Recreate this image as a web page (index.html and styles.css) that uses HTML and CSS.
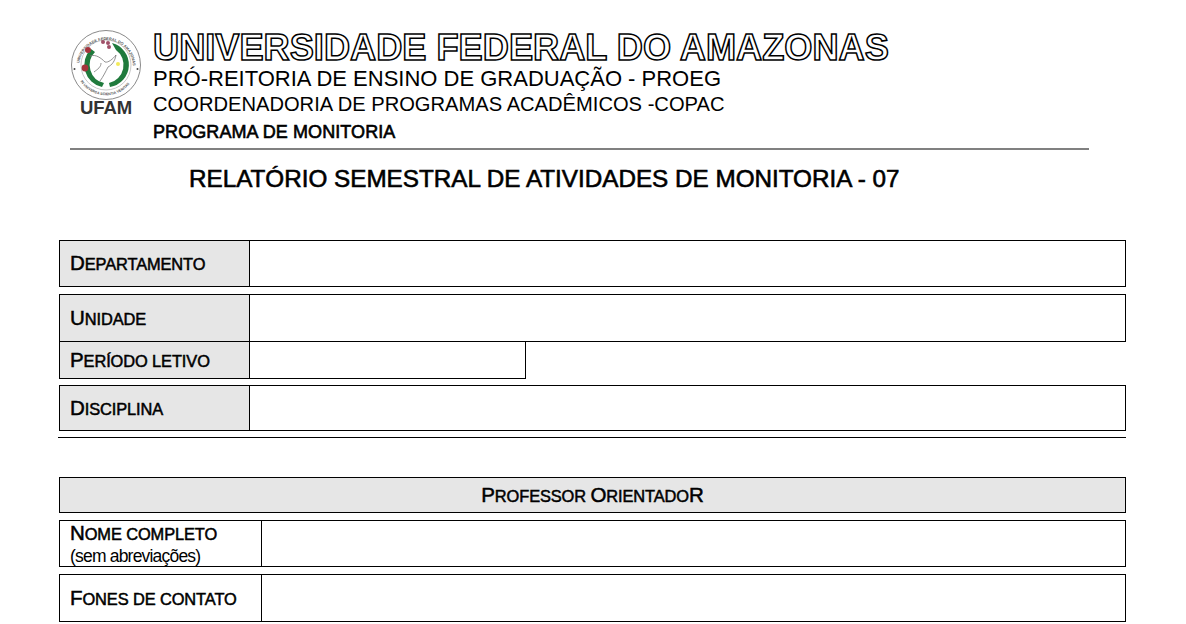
FILE: index.html
```html
<!DOCTYPE html>
<html lang="pt">
<head>
<meta charset="utf-8">
<title>Relatório semestral</title>
<link rel="stylesheet" href="styles.css">
</head>
<body>
<header class="head">
  <div class="logo">
    <svg class="seal" width="72" height="72" viewBox="0 0 72 72" aria-hidden="true">
      <circle cx="36" cy="36" r="34.5" fill="none" stroke="#8a8a8a" stroke-width="1"/>
      <circle cx="36" cy="36" r="25" fill="none" stroke="#c8c8c8" stroke-width="1"/>
      <path id="arcT" d="M9 38 A27 27 0 0 1 63 38" fill="none"/>
      <path id="arcB" d="M7 44 A30 30 0 0 0 65 44" fill="none"/>
      <text class="seal-text"><textPath href="#arcT" startOffset="4">UNIVERSIDADE FEDERAL DO AMAZONAS</textPath></text>
      <text class="seal-text small"><textPath href="#arcB" startOffset="9">IN UNIVERSA SCIENTIA VERITAS</textPath></text>
      <circle cx="4.5" cy="40" r="1" fill="#444"/><circle cx="67.5" cy="40" r="1" fill="#444"/>
      <path d="M21 20 A22.5 22.5 0 0 0 32 58 L34 54 A18.5 18.5 0 0 1 25 23 Z" fill="#1f7a3c"/>
      <path d="M42 14 A22.5 22.5 0 0 1 40 58 L39 54 A18.5 18.5 0 0 0 46 21 Z" fill="#1f7a3c"/>
      <circle cx="18" cy="21" r="3" fill="#a5343c"/><circle cx="15" cy="39" r="3.4" fill="#a5343c"/>
      <circle cx="33" cy="13" r="2" fill="#a05068"/><circle cx="38" cy="14" r="2" fill="#a05068"/><circle cx="39" cy="18" r="2" fill="#a05068"/>
      <circle cx="48" cy="35" r="2" fill="#f2ea5a"/>
      <path d="M20 27 C26 25 31 29 35 33 C38 34 43 30 46 26 C45 32 42 36 38 38 C36 42 33 48 30 52 M24 43 C28 40 31 38 31 34" fill="none" stroke="#777" stroke-width=".8"/>
    </svg>
    <span class="ufam">UFAM</span>
  </div>
  <div class="head-text">
    <h1 class="uni">UNIVERSIDADE FEDERAL DO AMAZONAS</h1>
    <p class="proeg">PRÓ-REITORIA DE ENSINO DE GRADUAÇÃO - PROEG</p>
    <p class="copac">COORDENADORIA DE PROGRAMAS ACADÊMICOS -COPAC</p>
    <p class="prog">PROGRAMA DE MONITORIA</p>
  </div>
</header>
<hr class="rule">
<h2 class="title">RELATÓRIO SEMESTRAL DE ATIVIDADES DE MONITORIA - 07</h2>

<main class="form">
  <div class="row h47 gap-after"><div class="label"><span class="caps"><b class="cap">D</b>epartamento</span></div><div class="value"></div></div>
  <div class="row h48"><div class="label"><span class="caps"><b class="cap">U</b>nidade</span></div><div class="value"></div></div>
  <div class="row-split">
    <div class="label"><span class="caps"><b class="cap">P</b>eríodo letivo</span></div><div class="value"></div>
  </div>
  <div class="row h46"><div class="label"><span class="caps"><b class="cap">D</b>isciplina</span></div><div class="value"></div></div>
  <div class="divider"></div>
  <div class="banner"><span class="caps"><b class="cap">P</b>rofessor <b class="cap">O</b>rientado<b class="cap">R</b></span></div>
  <div class="row h47 wide gap-after"><div class="label plain"><span class="caps"><b class="cap">N</b>ome completo</span><small>(sem abreviações)</small></div><div class="value"></div></div>
  <div class="row h48 wide"><div class="label plain"><span class="caps"><b class="cap">F</b>ones de contato</span></div><div class="value"></div></div>
</main>
</body>
</html>
```
FILE: styles.css
```css
* { box-sizing: border-box; }
html, body { margin: 0; padding: 0; background: #fff; }
body {
  width: 1186px;
  height: 624px;
  overflow: hidden;
  font-family: "Liberation Sans", Arial, sans-serif;
  color: #000;
}
.head { display: flex; padding: 29px 0 0 70px; height: 148px; }
.logo { width: 83px; display: flex; flex-direction: column; align-items: flex-start; }
.seal { display: block; }
.seal-text { font-size: 3.9px; fill: #555; font-weight: bold; }
.seal-text.small { font-size: 3.6px; }
.ufam { font-weight: bold; font-size: 18.5px; line-height: 14px; margin: 0 0 0 10px; color: #333; letter-spacing: -.1px; }
.head-text { display: flex; flex-direction: column; }
.uni {
  margin: 0;
  font-size: 36.2px;
  line-height: 37px;
  font-weight: bold;
  color: #fff;
  -webkit-text-stroke: 1.5px #000;
  white-space: nowrap;
}
.proeg { margin: 0; font-size: 22px; line-height: 25px; }
.copac { margin: 0; font-size: 20.15px; line-height: 27px; }
.prog { margin: 0; font-size: 18px; line-height: 28px; font-weight: normal; letter-spacing: .08px; -webkit-text-stroke: .6px #000; }
.rule { margin: 0 0 0 70px; width: 1019px; height: 2px; border: 0; background: #808080; }
.title {
  margin: 0 0 0 189px;
  font-size: 24.25px;
  line-height: 28px;
  padding-top: 15px;
  height: 90px;
  font-weight: normal;
  -webkit-text-stroke: .6px #000;
  white-space: nowrap;
}
.form { margin-left: 59px; width: 1067px; }
.row { display: flex; border: 1px solid #000; }
.h47 { height: 47px; }
.h48 { height: 48px; }
.h46 { height: 46px; }
.gap-after { margin-bottom: 7px; }
.label {
  width: 190px;
  flex: none;
  display: flex;
  flex-direction: column;
  justify-content: center;
  padding-left: 10px;
  background: #e6e6e6;
  border-right: 1px solid #000;
}
.caps {
  display: block;
  text-transform: uppercase;
  font-size: 16.4px;
  letter-spacing: -.1px;
  line-height: 24px;
  -webkit-text-stroke: .5px #000;
  white-space: nowrap;
}
.cap { font-weight: normal; font-size: 20.5px; }
.wide .label { width: 202px; }
.label.plain { background: #fff; }
.label small {
  font-size: 17.5px;
  line-height: 20px;
  letter-spacing: -.8px;
}
.value { flex: 1; }
.row-split { display: flex; width: 467px; height: 37px; margin-bottom: 6px; border: 1px solid #000; border-top: 0; }
.divider { height: 1px; margin: 6px 0 39px -1px; background: #000; }
.banner {
  height: 36px;
  margin-bottom: 7px;
  border: 1px solid #000;
  background: #e6e6e6;
  display: flex;
  align-items: center;
  justify-content: center;
}
```
